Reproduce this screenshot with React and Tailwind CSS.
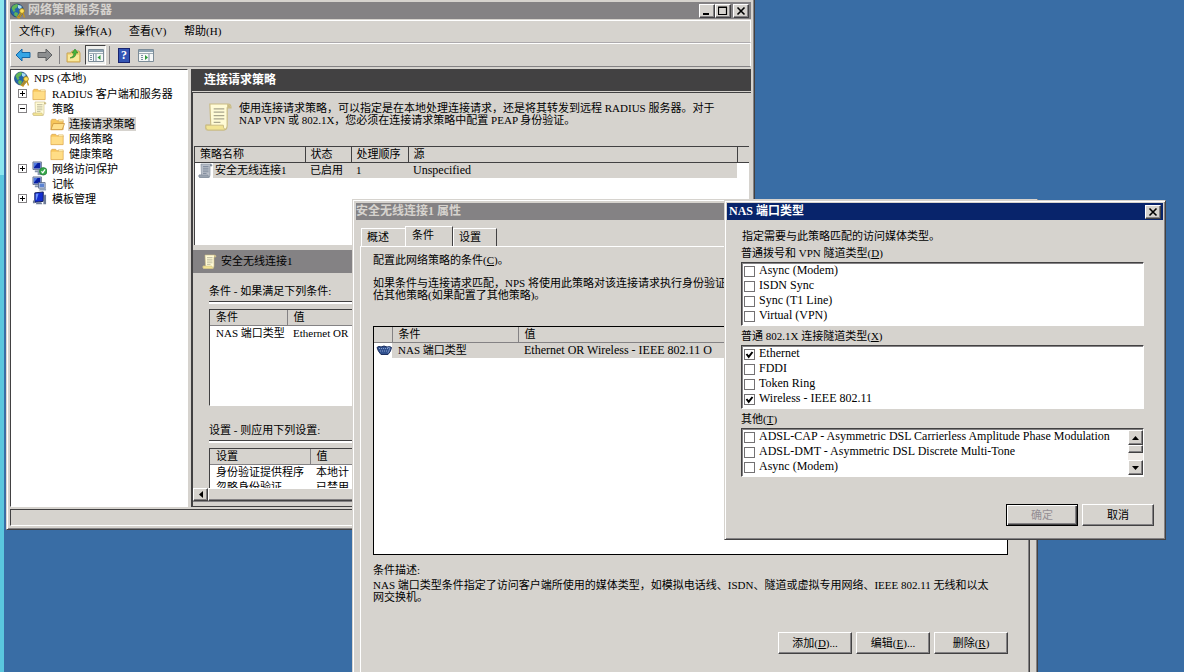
const raised = "border border-t-white border-l-white border-b-[#424142] border-r-[#424142] shadow-[inset_-1px_-1px_0_#848284]";
const sunken = "border border-t-[#424142] border-l-[#424142] border-b-white border-r-white";
const windowFrame = "border border-t-[#d6d3ce] border-l-[#d6d3ce] border-b-[#424142] border-r-[#424142] bg-[#d6d3ce] shadow-[inset_1px_1px_0_#fff,inset_-1px_-1px_0_#848284]";

function FolderIcon({ open }) {
  return (
    <svg viewBox="0 0 16 14" className="h-[14px] w-[15px] shrink-0" aria-hidden="true">
      <path d="M1 3.500 2 2h4l1.500 1.500H14V13H1z" fill="#f7c65a" stroke="#d9a650" strokeWidth=".8" />
      <path d="M9 2.500h5v2H9z" fill="#fff3bd" stroke="#d6a54c" strokeWidth=".5" />
      {open ? (
        <path d="M3.500 6.500H15.500L13 13H1z" fill="#ffe08c" stroke="#c8913a" strokeWidth=".8" />
      ) : (
        <path d="M1.500 4.500h12v8h-12z" fill="#ffdd86" />
      )}
    </svg>
  );
}

function ScrollIcon({ gray, className = "h-[15px] w-[15px]" }) {
  const paper = gray ? "#b9bfc9" : "#fffbd6";
  const edge = gray ? "#7b8796" : "#c9bb84";
  return (
    <svg viewBox="0 0 28 30" className={`shrink-0 ${className}`} aria-hidden="true">
      <path d="M5 2h19q3 0 3 4h-4v18q0 5-4 5H2q-2-1-1-5h5z" fill={paper} stroke={edge} strokeWidth="1.200" />
      <path d="M1 24h18q0 5 3 4-1 1-3 1H3q-3-1-2-5z" fill={gray ? "#99a3b0" : "#f2e493"} stroke={edge} />
      <path d="M23 2q3 0 4 4h-4z" fill={edge} />
      <path d="M9 7h11M9 10.500h11M9 14h11M9 17.500h11M9 21h7" stroke={gray ? "#68768a" : "#a9a68d"} strokeWidth="1.300" />
    </svg>
  );
}

function GlobeIcon() {
  return (
    <svg viewBox="0 0 16 16" className="h-[16px] w-[16px] shrink-0" aria-hidden="true">
      <circle cx="7" cy="7.500" r="6.500" fill="#2467a8" stroke="#153b68" strokeWidth=".7" />
      <path d="M1.500 5q1-3 5-4l2 1-2 3-2 1 1 2-2 1zM5 9l3 1-1 4q-3-1-3-3z" fill="#62b657" />
      <path d="M8 2q3 0 4 2l-2 2-2-1z" fill="#a8dcf4" />
      <circle cx="12" cy="8" r="2.400" fill="#ffe15a" stroke="#9a7a14" strokeWidth=".8" />
      <path d="m10.500 10-3 4 1.500 1 3-4.500M13 10l1.500 4.500" stroke="#c7961c" strokeWidth="1.300" fill="none" />
    </svg>
  );
}

function ComputerIcon({ kind }) {
  return (
    <svg viewBox="0 0 16 16" className="h-[15px] w-[15px] shrink-0" aria-hidden="true">
      {kind === "template" ? (
        <>
          <path d="M3 2 12 1v10l-9 1z" fill="#142ed0" stroke="#0b1558" />
          <path d="M4 3 7 2.700 5 9l-1 1z" fill="#6f94fa" />
          <path d="M13 4h2v10h-3zM1 10h2v3H1zM5 12h5l1 2H4z" fill="#6d7b96" />
        </>
      ) : (
        <>
          <path d="M1 1h9v8H1z" fill="#c9d5ea" stroke="#455475" strokeWidth=".8" />
          <path d="M2 2h7v6H2z" fill="#0920a2" />
          <path d="m2 2 4 0-4 5z" fill="#4d79e0" />
          <path d="M3 10h6v2H3z" fill="#8292ac" />
          {kind === "shield" ? (
            <>
              <path d="M6 10h8v5H6z" fill="#8b9ab0" />
              <circle cx="12" cy="11" r="4" fill="#37a94b" stroke="#1f7631" strokeWidth=".7" />
              <path d="m10 11 1.500 1.500L14 9" fill="none" stroke="#fff" strokeWidth="1.300" />
            </>
          ) : (
            <>
              <path d="M7 7h7v6H7z" fill="#d7e1ef" stroke="#455475" strokeWidth=".8" />
              <path d="M8 8h5v4H8z" fill="#5c83d2" />
              <path d="M9 13h6v2.500H7z" fill="#93a3b9" />
            </>
          )}
        </>
      )}
    </svg>
  );
}

function ArrowIcon({ forward }) {
  return (
    <svg viewBox="0 0 16 14" className="h-[14px] w-[16px]" aria-hidden="true">
      {forward ? (
        <path d="M15 7 9 1v3.500H1v5h8V13z" fill="#8c8e8f" stroke="#5e6062" />
      ) : (
        <path d="m1 7 6-6v3.500h8v5H7V13z" fill="#35a5e5" stroke="#1767a5" />
      )}
    </svg>
  );
}

function PaneIcon({ flip }) {
  return (
    <svg viewBox="0 0 16 13" className="h-[13px] w-[16px]" aria-hidden="true">
      <path d="M.5.500h15v12H.5z" fill="#f6f8f8" stroke="#7c8c98" />
      <path d="M1 1h14v2H1z" fill="#8da3b2" />
      <path d="M1 4.500h14" stroke="#9eacb4" />
      {flip ? (
        <>
          <path d="M11 5v7M3 6.500h2M3 8.500h2M3 10.500h2" stroke="#7990a1" />
          <path d="m7 6 3 2.500L7 11z" fill="#2d9b3a" />
        </>
      ) : (
        <>
          <path d="M5.500 5v7M8 5v7M2 6.500h2M2 8.500h2M2 10.500h2" stroke="#7990a1" />
          <path d="m12.500 6-3 2.500 3 2.500z" fill="#2d9b3a" />
        </>
      )}
    </svg>
  );
}

function UpFolderIcon() {
  return (
    <svg viewBox="0 0 15 15" className="h-[15px] w-[15px]" aria-hidden="true">
      <path d="M1 5h4l1-2h7l1 2v9H1z" fill="#f2d878" stroke="#c9a355" />
      <path d="M2 7h11v6H2z" fill="#fae99b" />
      <path d="M4 10q4-1 4-5H6l3-4 3 4h-2q0 5-6 5z" fill="#48b73c" stroke="#287b26" strokeWidth=".6" />
    </svg>
  );
}

function PortIcon() {
  return (
    <svg viewBox="0 0 16 11" className="h-[11px] w-[16px] shrink-0" aria-hidden="true">
      <path d="M1 2.500Q3 .500 5 2q3-2 6 0 3-1 4.500.500-.5 4-3.500 7H5q-3-3-4-7z" fill="#31518e" stroke="#1e315f" />
      <path d="M3 3.500h9M4 6h7" stroke="#8aa2d0" strokeDasharray="1 1" />
      <path d="m11 2 3 1-2 5" stroke="#7590c5" fill="none" />
    </svg>
  );
}

function CaptionButton({ label, kind }) {
  return (
    <button type="button" aria-label={label} className={`grid h-[14px] w-[16px] place-items-center bg-[#d6d3ce] ${raised}`}>
      <svg viewBox="0 0 10 10" className="h-[10px] w-[10px]" fill="none" stroke="#000" aria-hidden="true">
        {kind === "min" && <path d="M1 8h6" strokeWidth="2" />}
        {kind === "max" && <path d="M.5 1.500h8v7h-8zM0 1h9" strokeWidth="1.200" />}
        {kind === "close" && <path d="m1.500 1.500 7 7m0-7-7 7" strokeWidth="1.600" />}
      </svg>
    </button>
  );
}

function PushButton({ children, disabled, isDefault }) {
  return (
    <button
      type="button"
      disabled={disabled}
      className={`h-[22px] bg-[#d6d3ce] ${isDefault ? "w-[72px] border border-black text-[#948e94] shadow-[inset_1px_1px_0_#fff,inset_-1px_-1px_0_#424142,inset_-2px_-2px_0_#848284]" : `min-w-[72px] ${raised}`}`}
    >
      {children}
    </button>
  );
}

const menus = [
  ["文件", "F"],
  ["操作", "A"],
  ["查看", "V"],
  ["帮助", "H"],
];

const tree = [
  { label: "RADIUS 客户端和服务器", icon: <FolderIcon />, toggle: "+" },
  { label: "策略", icon: <ScrollIcon />, toggle: "-" },
  { label: "连接请求策略", icon: <FolderIcon open />, child: true, selected: true },
  { label: "网络策略", icon: <FolderIcon />, child: true },
  { label: "健康策略", icon: <FolderIcon />, child: true },
  { label: "网络访问保护", icon: <ComputerIcon kind="shield" />, toggle: "+" },
  { label: "记帐", icon: <ComputerIcon /> },
  { label: "模板管理", icon: <ComputerIcon kind="template" />, toggle: "+" },
];

function Expander({ sign }) {
  if (!sign) return <span className="w-[9px]" />;
  return (
    <button type="button" aria-label={sign === "+" ? "展开" : "折叠"} className="grid h-[9px] w-[9px] place-items-center border border-[#848284] bg-white">
      <svg viewBox="0 0 5 5" className="h-[5px] w-[5px]" stroke="#000" aria-hidden="true">
        <path d={sign === "+" ? "M0 2.500h5M2.500 0v5" : "M0 2.500h5"} />
      </svg>
    </button>
  );
}

function NavTree() {
  return (
    <nav className={`w-[178px] shrink-0 bg-white pt-px ${sunken}`}>
      <div className="flex h-[15px] items-center gap-[4px] pl-[3px]">
        <GlobeIcon />
        <span>NPS (本地)</span>
      </div>
      <ul>
        {tree.map((item) => (
          <li key={item.label} className={`flex h-[15px] items-center ${item.child ? "pl-[39px]" : "gap-[5px] pl-[7px]"}`}>
            {!item.child && <Expander sign={item.toggle} />}
            {item.icon}
            <a href="#" className={`whitespace-nowrap leading-[14px] ${item.child ? "ml-[3px] px-px" : ""} ${item.selected ? "bg-[#d6d3ce]" : ""}`}>
              {item.label}
            </a>
          </li>
        ))}
      </ul>
    </nav>
  );
}

function SubList({ title, columns, rows, className, first }) {
  return (
    <section className="pl-[16px]">
      <h3 className="h-[18px] border-b border-[#424142] shadow-[0_2px_0_#fff]">{title}</h3>
      <div className={`mt-[7px] overflow-hidden border border-r-0 border-[#424142] border-b-white bg-white ${className}`}>
        <table className="w-[540px] table-fixed text-left">
          <thead>
            <tr className="h-[15px] bg-[#d6d3ce]">
              <th className={`border-b border-r border-b-[#848284] border-r-[#848284] pl-[6px] font-normal ${first}`}>{columns[0]}</th>
              <th className="border-b border-[#848284] pl-[6px] font-normal">{columns[1]}</th>
            </tr>
          </thead>
          <tbody>
            {rows.map((row) => (
              <tr key={row[0]} className="h-[15px]">
                <td className="whitespace-nowrap pl-[6px]">{row[0]}</td>
                <td className="whitespace-nowrap pl-[6px]">{row[1]}</td>
              </tr>
            ))}
          </tbody>
        </table>
      </div>
    </section>
  );
}

function PolicyPane() {
  return (
    <main className="flex min-w-0 flex-1 flex-col border-l border-b border-[#424142]">
      <h1 className="h-[22px] shrink-0 bg-[#424142] pl-[12px] text-[12px] font-bold leading-[22px] text-white">连接请求策略</h1>
      <div className="mt-px flex min-h-0 flex-1 flex-col border-l border-t border-[#424142]">
        <div className="flex h-[53px] shrink-0 gap-[7px] pl-[12px] pt-[9px]">
          <ScrollIcon className="h-[29px] w-[27px]" />
          <p className="leading-[12px]">
            使用连接请求策略，可以指定是在本地处理连接请求，还是将其转发到远程 RADIUS 服务器。对于
            <br />
            NAP VPN 或 802.1X，您必须在连接请求策略中配置 PEAP 身份验证。
          </p>
        </div>
        <div className="ml-px mr-[2px] h-[99px] shrink-0 border-l border-t border-[#424142] bg-white">
          <table className="w-full table-fixed text-left">
            <thead>
              <tr className="h-[15px] bg-[#d6d3ce] *:border-b *:border-r *:border-[#424142] *:pl-[5px] *:font-normal">
                <th className="w-[110px]">策略名称</th>
                <th className="w-[46px]">状态</th>
                <th className="w-[57px]">处理顺序</th>
                <th>源</th>
                <th className="w-[12px] border-r-0!" aria-label="空白" />
              </tr>
            </thead>
            <tbody>
              <tr className="h-[15px] *:bg-[#d6d3ce] *:pl-[5px]">
                <td className="bg-white! pl-[3px]!">
                  <div className="flex items-center">
                    <ScrollIcon gray />
                    <span className="h-[15px] flex-1 bg-[#d6d3ce] pl-[2px]">安全无线连接1</span>
                  </div>
                </td>
                <td>已启用</td>
                <td>1</td>
                <td className="text-[12px]">Unspecified</td>
                <td className="bg-white!" />
              </tr>
            </tbody>
          </table>
        </div>
        <div className="mt-[5px] flex h-[23px] shrink-0 items-center gap-[4px] bg-[#848284] pl-[9px]">
          <ScrollIcon />
          <h2>安全无线连接1</h2>
        </div>
        <div className="flex min-h-0 flex-1 flex-col gap-[17px] overflow-hidden pt-[11px]">
          <SubList
            title="条件 - 如果满足下列条件:"
            columns={["条件", "值"]}
            rows={[["NAS 端口类型", "Ethernet OR"]]}
            className="h-[97px]"
            first="w-[77px]"
          />
          <SubList
            title="设置 - 则应用下列设置:"
            columns={["设置", "值"]}
            rows={[["身份验证提供程序", "本地计"], ["忽略身份验证", "已禁用"]]}
            className="h-[41px]"
            first="w-[100px]"
          />
        </div>
        <div className="flex h-[14px] shrink-0 border-b border-[#848284]">
          <button type="button" aria-label="向左滚动" className={`grid w-[15px] place-items-center ${raised}`}>
            <svg viewBox="0 0 4 7" className="h-[7px] w-[4px]" aria-hidden="true">
              <path d="M4 0v7L0 3.500z" />
            </svg>
          </button>
          <div className={`flex-1 ${raised}`} />
        </div>
        <div className="h-[4px] shrink-0" />
      </div>
    </main>
  );
}

function ServerWindow() {
  return (
    <div className={`absolute -top-[2px] left-[6px] flex h-[532px] w-[749px] flex-col p-[3px] ${windowFrame}`}>
      <header className="flex h-[17px] shrink-0 items-center bg-[#848284] pr-[2px] text-[12px] font-bold text-[#d6d3ce]">
        <GlobeIcon />
        <span className="flex-1 pl-[2px]">网络策略服务器</span>
        <CaptionButton label="最小化" kind="min" />
        <CaptionButton label="最大化" kind="max" />
        <span className="w-[2px]" />
        <CaptionButton label="关闭" kind="close" />
      </header>
      <div className="mt-px flex h-[23px] shrink-0 items-center border border-white border-b-[#adaaad] pl-[8px]">
        {menus.map(([label, key]) => (
          <button key={key} type="button" className="w-[55px] text-left">
            {label}({key})
          </button>
        ))}
      </div>
      <div className="flex h-[24px] shrink-0 items-center border border-white border-b-[#848284] pl-[4px]">
        <button type="button" aria-label="后退"><ArrowIcon /></button>
        <button type="button" aria-label="前进" className="ml-[6px]"><ArrowIcon forward /></button>
        <span className="mx-[6px] h-[18px] w-px bg-[#848284]" />
        <button type="button" aria-label="上移一级" className="mr-[4px]"><UpFolderIcon /></button>
        <button type="button" aria-label="显示/隐藏控制台树" className={`grid h-[20px] w-[21px] place-items-center bg-[#efefec] ${sunken}`}><PaneIcon /></button>
        <span className="ml-[3px] mr-[8px] h-[18px] w-px bg-[#848284]" />
        <button type="button" aria-label="帮助" className="grid h-[15px] w-[12px] place-items-center border border-[#19246f] bg-[#3455b4] text-[12px] font-bold leading-[13px] text-white">?</button>
        <button type="button" aria-label="显示/隐藏操作窗格" className="ml-[8px]"><PaneIcon flip /></button>
      </div>
      <div className="mt-[2px] flex min-h-0 flex-1 gap-[3px]">
        <NavTree />
        <PolicyPane />
      </div>
      <footer className={`mt-[2px] h-[17px] shrink-0 ${sunken}`} />
    </div>
  );
}

function PropertiesWindow() {
  const tab = "border border-b-0 border-t-white border-l-white border-r-[#424142] text-left";
  return (
    <div className={`absolute left-[352px] top-[199px] w-[686px] p-[3px] ${windowFrame}`}>
      <header className="h-[17px] bg-[#848284] text-[12px] font-bold leading-[17px] text-[#d6d3ce]">安全无线连接1 属性</header>
      <div role="tablist" className="flex items-end pl-[5px] pt-[6px]">
        <button type="button" role="tab" className={`h-[18px] w-[44px] border-r-0! pl-[5px] ${tab}`}>概述</button>
        <button type="button" role="tab" aria-selected="true" className={`h-[20px] w-[48px] pb-[2px] pl-[6px] ${tab}`}>条件</button>
        <button type="button" role="tab" className={`h-[18px] w-[44px] pl-[5px] ${tab}`}>设置</button>
      </div>
      <div className="mx-[4px] h-[440px] border border-white border-r-[#424142] pl-[12px] pr-[21px] pt-[6px] shadow-[inset_-1px_0_0_#848284]">
        <p>配置此网络策略的条件(<u>C</u>)。</p>
        <p className="mt-[9px] leading-[12px]">
          如果条件与连接请求匹配，NPS 将使用此策略对该连接请求执行身份验证
          <br />
          估其他策略(如果配置了其他策略)。
        </p>
        <div className="mt-[25px] h-[229px] border border-black bg-white">
          <table className="w-full table-fixed text-left">
            <thead>
              <tr className="h-[15px] bg-[#d6d3ce] *:border-b *:border-r *:border-[#848284] *:pl-[6px] *:font-normal">
                <th className="w-[18px]" aria-label="图标" />
                <th className="w-[126px]">条件</th>
                <th>值</th>
              </tr>
            </thead>
            <tbody>
              <tr className="h-[15px] *:bg-[#d6d3ce]">
                <td className="bg-white!"><div className="pl-[2px]"><PortIcon /></div></td>
                <td className="pl-[6px]">NAS 端口类型</td>
                <td className="pl-[6px] text-[12px]">Ethernet OR Wireless - IEEE 802.11 O</td>
              </tr>
            </tbody>
          </table>
        </div>
        <h3 className="mt-[8px]">条件描述:</h3>
        <p className="mt-px leading-[12px]">
          NAS 端口类型条件指定了访问客户端所使用的媒体类型，如模拟电话线、ISDN、隧道或虚拟专用网络、IEEE 802.11 无线和以太
          <br />
          网交换机。
        </p>
        <div className="mt-[29px] flex justify-end gap-[4px] *:w-[74px]">
          <PushButton>添加(<u>D</u>)...</PushButton>
          <PushButton>编辑(<u>E</u>)...</PushButton>
          <PushButton>删除(<u>R</u>)</PushButton>
        </div>
      </div>
    </div>
  );
}

function CheckItem({ label, checked }) {
  return (
    <label className="flex h-[15px] items-start gap-[4px] whitespace-nowrap pl-[2px] text-[12px] leading-[13px]">
      <span className="relative mt-[2px] grid shrink-0">
        <input type="checkbox" defaultChecked={checked} className="peer h-[11px] w-[11px] appearance-none border border-[#737173] bg-white" />
        <svg viewBox="0 0 11 11" className="pointer-events-none absolute inset-0 hidden h-[11px] w-[11px] peer-checked:block" aria-hidden="true">
          <path d="m2.500 5 2.200 2.800L8.500 3" fill="none" stroke="#000" strokeWidth="2" />
        </svg>
      </span>
      {label}
    </label>
  );
}

function CheckGroup({ title, hotkey, items, scroll }) {
  return (
    <fieldset className="min-w-0">
      <legend className="h-[16px]">{title}(<u>{hotkey}</u>)</legend>
      <div className={`flex bg-white ${sunken} shadow-[inset_1px_1px_0_#848284]`}>
        <div className="min-w-0 flex-1 py-px">
          {items.map(([label, checked]) => <CheckItem key={label} label={label} checked={checked} />)}
        </div>
        {scroll && (
          <div className="my-px flex w-[15px] shrink-0 flex-col bg-[#efebe7]">
            <button type="button" aria-label="向上滚动" className={`grid h-[15px] place-items-center bg-[#d6d3ce] ${raised}`}>
              <svg viewBox="0 0 7 4" className="h-[4px] w-[7px]" aria-hidden="true"><path d="M0 4h7L3.500 0z" /></svg>
            </button>
            <div className={`h-[8px] bg-[#d6d3ce] ${raised}`} />
            <div className="flex-1" />
            <button type="button" aria-label="向下滚动" className={`grid h-[15px] place-items-center bg-[#d6d3ce] ${raised}`}>
              <svg viewBox="0 0 7 4" className="h-[4px] w-[7px]" aria-hidden="true"><path d="M0 0h7L3.500 4z" /></svg>
            </button>
          </div>
        )}
      </div>
    </fieldset>
  );
}

function PortTypeDialog() {
  return (
    <div role="dialog" aria-label="NAS 端口类型" className={`absolute left-[724px] top-[200px] w-[442px] p-[2px] ${windowFrame}`}>
      <header className="flex h-[17px] items-center justify-between bg-[#08246b] pl-[2px] pr-[2px] text-[12px] font-bold text-white">
        <span>NAS 端口类型</span>
        <CaptionButton label="关闭" kind="close" />
      </header>
      <div className="pb-[11px] pl-[14px] pr-[19px] pt-[9px]">
        <p className="h-[17px] pl-px">指定需要与此策略匹配的访问媒体类型。</p>
        <div className="flex flex-col gap-[3px]">
          <CheckGroup
            title="普通拨号和 VPN 隧道类型"
            hotkey="D"
            items={[["Async (Modem)"], ["ISDN Sync"], ["Sync (T1 Line)"], ["Virtual (VPN)"]]}
          />
          <CheckGroup
            title="普通 802.1X 连接隧道类型"
            hotkey="X"
            items={[["Ethernet", true], ["FDDI"], ["Token Ring"], ["Wireless - IEEE 802.11", true]]}
          />
          <CheckGroup
            title="其他"
            hotkey="T"
            scroll
            items={[["ADSL-CAP - Asymmetric DSL Carrierless Amplitude Phase Modulation"], ["ADSL-DMT - Asymmetric DSL Discrete Multi-Tone"], ["Async (Modem)"]]}
          />
        </div>
        <div className="-mr-[10px] mt-[27px] flex justify-end gap-[4px]">
          <PushButton disabled isDefault>确定</PushButton>
          <PushButton>取消</PushButton>
        </div>
      </div>
    </div>
  );
}

export default function App() {
  return (
    <div className="relative h-screen w-full overflow-hidden bg-[#396da5] font-['Liberation_Serif','Noto_Sans_CJK_SC',serif] text-[11px] leading-[15px] text-black">
      <div className="flex h-full w-[4px] flex-col">
        <div className="h-[175px] bg-[#8ce7ef]" />
        <div className="flex-1 bg-[#5ac7de]" />
      </div>
      <ServerWindow />
      <PropertiesWindow />
      <PortTypeDialog />
    </div>
  );
}
